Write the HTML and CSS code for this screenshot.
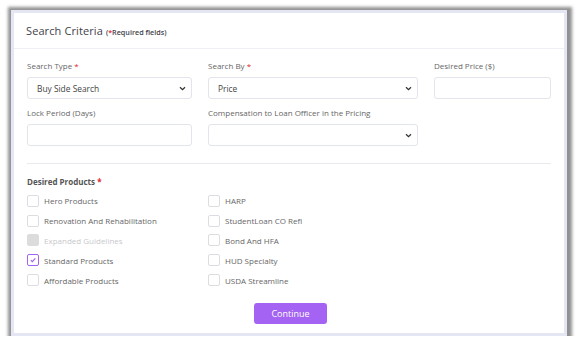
FILE: index.html
```html
<!DOCTYPE html>
<html>
<head>
<meta charset="utf-8">
<link rel="stylesheet" href="styles.css">
</head>
<body>
<div class="frame">
  <div class="card">
    <div class="card-header">
      <span class="title">Search Criteria</span>
      <span class="req">(<span class="star">*</span>Required fields)</span>
    </div>
    <div class="card-body">
      <div class="grid">
        <div class="field">
          <div class="label">Search Type <span class="star">*</span></div>
          <div class="control select"><span>Buy Side Search</span><svg width="7" height="5" viewBox="0 0 7 5"><path d="M1 1.2 L3.5 3.6 L6 1.2" fill="none" stroke="#333" stroke-width="1.3"/></svg></div>
        </div>
        <div class="field">
          <div class="label">Search By <span class="star">*</span></div>
          <div class="control select"><span>Price</span><svg width="7" height="5" viewBox="0 0 7 5"><path d="M1 1.2 L3.5 3.6 L6 1.2" fill="none" stroke="#333" stroke-width="1.3"/></svg></div>
        </div>
        <div class="field">
          <div class="label">Desired Price ($)</div>
          <div class="control"></div>
        </div>
        <div class="field row2">
          <div class="label">Lock Period (Days)</div>
          <div class="control"></div>
        </div>
        <div class="field row2">
          <div class="label">Compensation to Loan Officer in the Pricing</div>
          <div class="control select"><span></span><svg width="7" height="5" viewBox="0 0 7 5"><path d="M1 1.2 L3.5 3.6 L6 1.2" fill="none" stroke="#333" stroke-width="1.3"/></svg></div>
        </div>
      </div>
      <hr class="divider">
      <div class="label bold">Desired Products <span class="star">*</span></div>
      <div class="checks">
        <div class="check"><span class="box"></span>Hero Products</div>
        <div class="check"><span class="box"></span>HARP</div>
        <div class="check"><span class="box"></span>Renovation And Rehabilitation</div>
        <div class="check"><span class="box"></span>StudentLoan CO Refi</div>
        <div class="check disabled"><span class="box"></span>Expanded Guidelines</div>
        <div class="check"><span class="box"></span>Bond And HFA</div>
        <div class="check"><span class="box checked"><svg width="8" height="8" viewBox="0 0 8 8"><path d="M1.8 4.2 L3.4 5.6 L6.3 2.4" fill="none" stroke="#a463f2" stroke-width="1.2"/></svg></span>Standard Products</div>
        <div class="check"><span class="box"></span>HUD Specialty</div>
        <div class="check"><span class="box"></span>Affordable Products</div>
        <div class="check"><span class="box"></span>USDA Streamline</div>
      </div>
      <div class="actions">
        <button class="btn">Continue</button>
      </div>
    </div>
  </div>
</div>
</body>
</html>
```

FILE: styles.css
```css
* { box-sizing: border-box; }
html, body { background: #fff; }
body {
  margin: 0;
  padding: 10px 0 0 11px;
  font-family: "Open Sans", "Noto Sans", sans-serif;
  color: #555;
}
.frame {
  width: 556px;
  height: 326px;
  border: 3px solid #e4e6f3;
  box-shadow: 1px 1px 3px 4px rgba(70,70,70,0.6);
  background: #fff;
  overflow: hidden;
}
.card { height: 100%; display: flex; flex-direction: column; }
.card-header {
  flex: none;
  height: 36px;
  padding: 0 12px;
  display: flex;
  align-items: center;
  border-bottom: 1px solid #eef0f5;
}
.title { font-size: 11px; color: #3f3f4a; letter-spacing: 0.1px; }
.req { font-size: 7.2px; color: #3f3f4a; margin-left: 3px; font-weight: 600; padding-top: 2px; }
.star { color: #e0252b; }
.card-body { padding: 11px 13px 0 13px; }
.grid {
  display: grid;
  grid-template-columns: 165px 210px 1fr;
  column-gap: 16px;
}
.row2 { margin-top: 8px; }
.label {
  font-size: 8px;
  line-height: 12px;
  color: #666;
  margin-bottom: 5px;
}
.label.bold { font-weight: 700; color: #555; margin-bottom: 3px; }
.control {
  height: 22px;
  border: 1px solid #e3e5ec;
  border-radius: 3px;
  background: #fff;
}
.select {
  display: flex;
  align-items: center;
  justify-content: space-between;
  padding: 0 5px 0 9px;
  font-size: 8.4px;
  color: #444;
}
.divider {
  border: 0;
  border-top: 1px solid #e9eaef;
  margin: 17px 0 12px 0;
}
.checks {
  display: grid;
  grid-template-columns: 181px 1fr;
}
.check {
  height: 19.8px;
  display: flex;
  align-items: center;
  font-size: 8px;
  color: #666;
}
.box {
  width: 12px;
  height: 12px;
  border: 1px solid #dcdde3;
  border-radius: 2px;
  margin-right: 5px;
  display: flex;
  align-items: center;
  justify-content: center;
}
.box.checked { border-color: #a463f2; }
.disabled { color: #c8c8cc; }
.disabled .box { background: #dcdcdc; border-color: #dcdcdc; }
.actions {
  display: flex;
  justify-content: center;
  margin-top: 13px;
  padding-left: 3px;
}
.btn {
  width: 73px;
  height: 21px;
  border: 0;
  border-radius: 3px;
  background: #a463f2;
  color: #fff;
  font-family: inherit;
  font-size: 9px;
}
```
